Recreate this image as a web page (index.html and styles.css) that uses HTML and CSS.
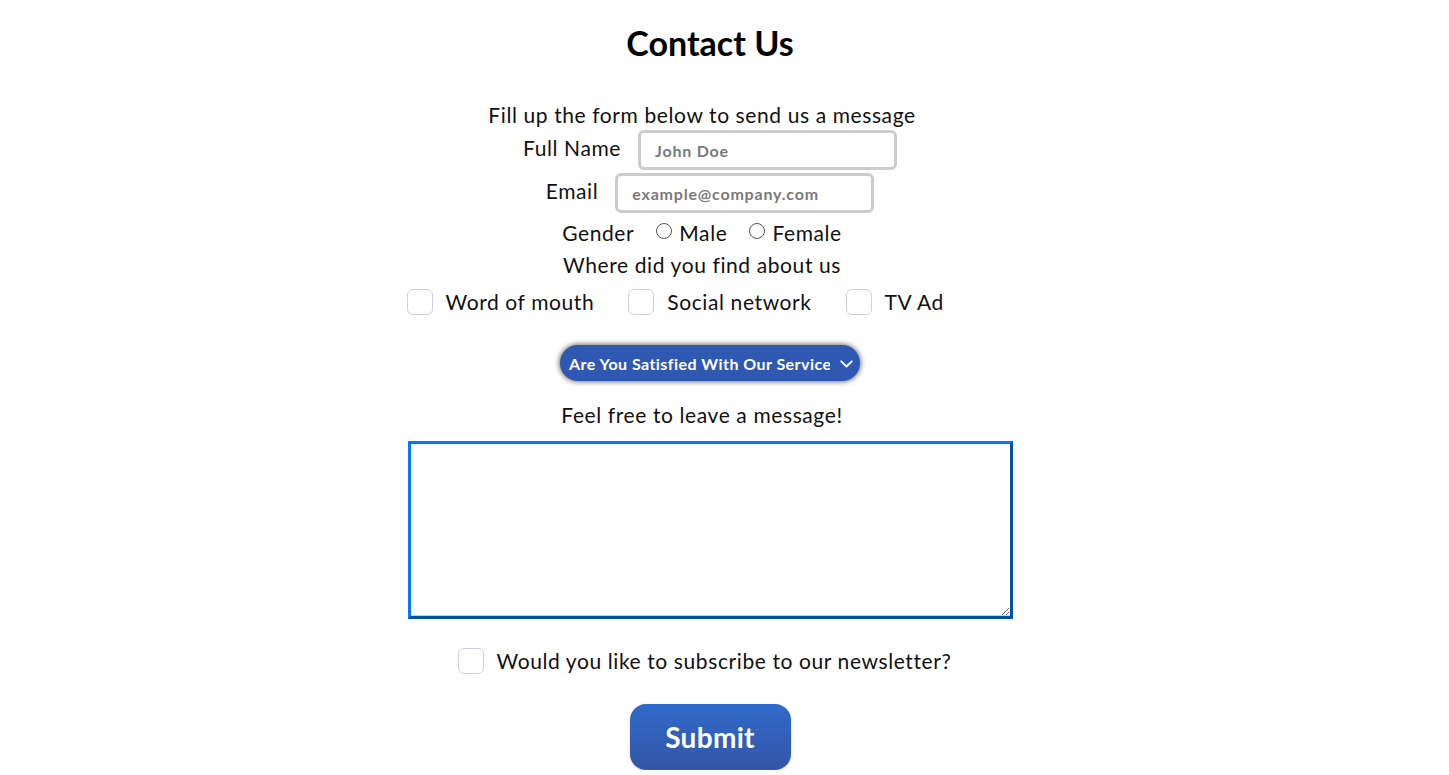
FILE: index.html
```html
<!DOCTYPE html>
<html lang="en">
<head>
<meta charset="utf-8">
<title>Contact Us</title>
<link rel="stylesheet" href="styles.css">
</head>
<body>
<main class="page">
  <h1 class="title">Contact Us</h1>
  <form class="form">
    <p class="line intro">Fill up the form below to send us a message</p>
    <div class="field">
      <label class="label" for="name">Full Name</label>
      <input class="text-input" id="name" type="text" placeholder="John Doe">
    </div>
    <div class="field field-tight">
      <label class="label" for="email">Email</label>
      <input class="text-input" id="email" type="email" placeholder="example@company.com">
    </div>
    <div class="gender">
      <span class="label">Gender</span>
      <label class="radio-opt"><input class="radio" type="radio" name="g">Male</label>
      <label class="radio-opt"><input class="radio" type="radio" name="g">Female</label>
    </div>
    <p class="line where">Where did you find about us</p>
    <div class="checks">
      <label class="check-opt"><input class="check" type="checkbox">Word of mouth</label>
      <label class="check-opt"><input class="check" type="checkbox">Social network</label>
      <label class="check-opt"><input class="check" type="checkbox">TV Ad</label>
    </div>
    <div class="select-wrap">
      <select class="select">
        <option>Are You Satisfied With Our Service</option>
        <option>Yes</option>
        <option>No</option>
      </select>
      <svg class="chevron" width="13" height="8" viewBox="0 0 13 8"><path d="M1.2 1.3 L6.5 6.5 L11.8 1.3" fill="none" stroke="#fff" stroke-width="1.8" stroke-linecap="round" stroke-linejoin="round"/></svg>
    </div>
    <p class="line feel">Feel free to leave a message!</p>
    <textarea class="message"></textarea>
    <label class="check-opt newsletter"><input class="check" type="checkbox">Would you like to subscribe to our newsletter?</label>
    <button class="submit" type="button">Submit</button>
  </form>
</main>
</body>
</html>
```
FILE: styles.css
```css
html, body {
  margin: 0;
  padding: 0;
  background: #fff;
}
body {
  font-family: Lato, "Open Sans", "Liberation Sans", sans-serif;
  color: #111;
}
.page {
  width: 1420px;
  display: flex;
  flex-direction: column;
  align-items: center;
}
.title {
  margin: 23px 0 0;
  font-size: 34px;
  line-height: 40px;
  font-weight: 700;
  color: #000;
}
.form {
  width: 605px;
  margin-top: 40px;
  display: flex;
  flex-direction: column;
  align-items: center;
  font-size: 21px;
  letter-spacing: 0.6px;
}
.line {
  margin: 0 16px 0 0;
  font-size: 21px;
  line-height: 24px;
  text-align: center;
}
.field {
  display: flex;
  align-items: center;
  gap: 17px;
  margin-top: 3px;
}
.label {
  font-size: 21px;
  line-height: 24px;
  position: relative;
  top: -2px;
}
.text-input {
  box-sizing: border-box;
  width: 259px;
  height: 40px;
  border: 3px solid #cccccc;
  border-radius: 6px;
  padding: 0 14px;
  font-family: inherit;
  font-size: 16px;
  letter-spacing: 0.8px;
  font-weight: 700;
  color: #333;
  outline: none;
}
.text-input::placeholder {
  color: #7a7a7a;
  font-weight: 700;
}
.gender {
  display: flex;
  align-items: center;
  margin: 8px 16px 0 0;
  line-height: 24px;
}
.gender .label {
  top: 0;
  margin-right: 22px;
}
.radio-opt {
  display: flex;
  align-items: center;
  gap: 7px;
  margin-right: 22px;
}
.radio-opt:last-child {
  margin-right: 0;
}
.radio {
  appearance: none;
  -webkit-appearance: none;
  margin: 0;
  width: 16px;
  height: 16px;
  border: 1px solid #555;
  border-radius: 50%;
  background: #fff;
  position: relative;
  top: -2px;
}
.where {
  margin-top: 8px;
}
.checks {
  align-self: stretch;
  display: flex;
  align-items: center;
  gap: 34px;
  margin-top: 12px;
  margin-left: -1px;
}
.check-opt {
  display: flex;
  align-items: center;
  gap: 13px;
  font-size: 21px;
  line-height: 26px;
}
.check {
  appearance: none;
  -webkit-appearance: none;
  margin: 0;
  width: 26px;
  height: 26px;
  border: 1px solid #cfcfe3;
  border-radius: 6px;
  background: #fff;
  flex: none;
}
.select-wrap {
  position: relative;
  margin-top: 30px;
}
.select {
  appearance: none;
  -webkit-appearance: none;
  display: block;
  width: 300px;
  height: 36px;
  border: none;
  border-radius: 18px;
  background: #2f58b2;
  color: #fff;
  font-family: inherit;
  font-size: 16px;
  font-weight: 700;
  letter-spacing: 0.45px;
  padding: 0 30px 0 9px;
  box-shadow: 0 0 5px 1px rgba(0, 0, 0, 0.55);
  outline: none;
}
.chevron {
  position: absolute;
  right: 7px;
  top: 15px;
  pointer-events: none;
}
.feel {
  margin-top: 22px;
}
.message {
  box-sizing: border-box;
  width: 605px;
  height: 178px;
  margin: 14px 0 0;
  border: 3px solid;
  border-color: #0a78f0 #0053a6 #0053a6 #0a78f0;
  box-shadow: inset 0 -1px 0 #cfcfcf;
  border-radius: 0;
  font-family: inherit;
  font-size: 16px;
  outline: none;
  resize: both;
}
.newsletter {
  margin-top: 29px;
  gap: 12px;
  position: relative;
  left: -5px;
}
.submit {
  margin-top: 30px;
  width: 161px;
  height: 66px;
  border: none;
  border-radius: 16px;
  background: linear-gradient(#2f6ac9, #3455a7);
  color: #fff;
  font-family: inherit;
  font-size: 28px;
  font-weight: 700;
  letter-spacing: 0.3px;
  box-shadow: 0 1px 3px rgba(0, 0, 0, 0.15);
  cursor: pointer;
}
```
